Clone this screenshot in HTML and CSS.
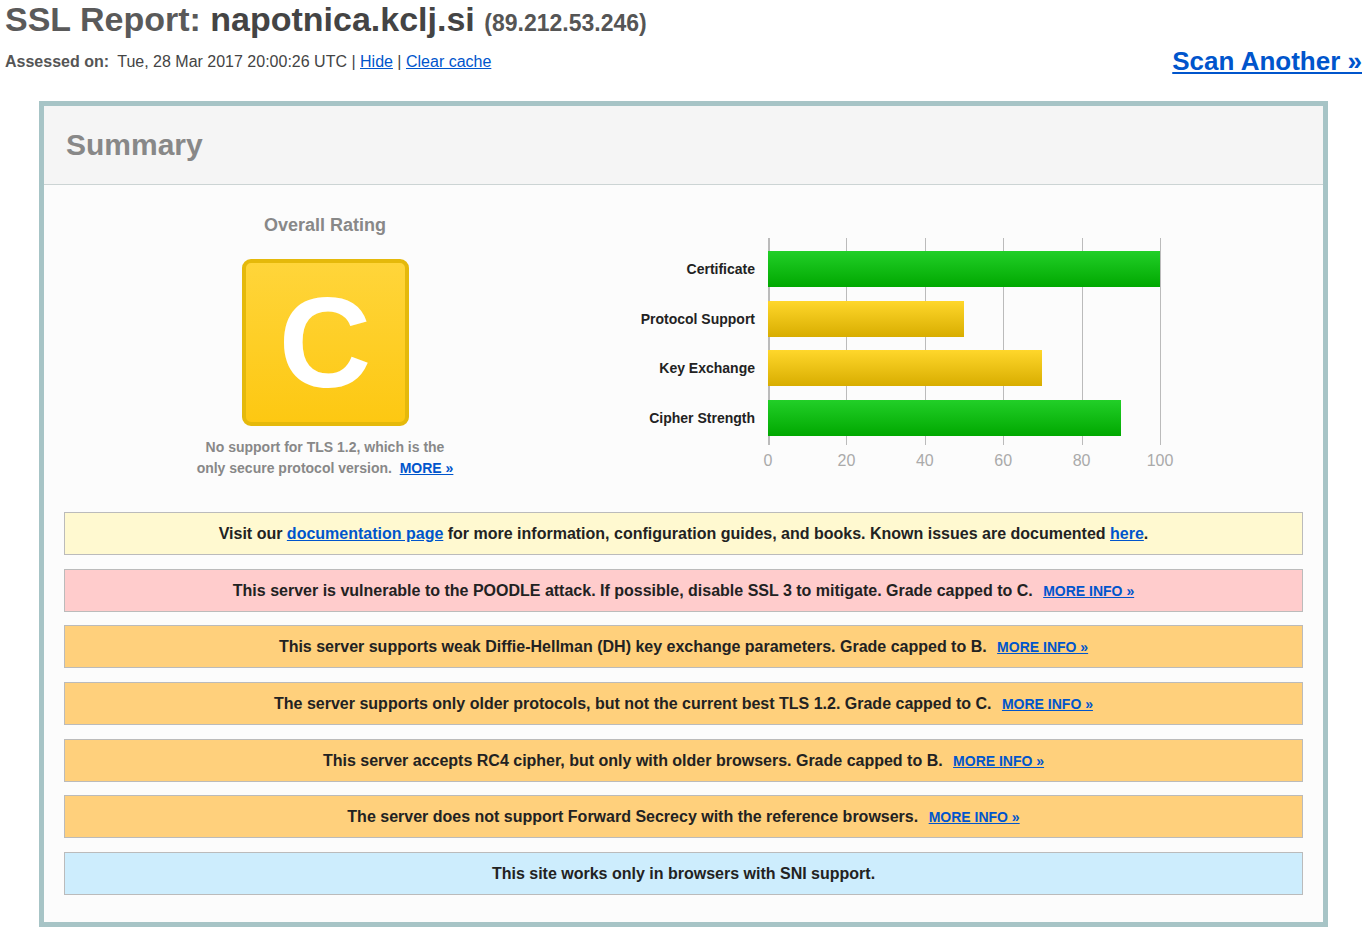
FILE: index.html
```html
<!DOCTYPE html>
<html lang="en">
<head>
  <meta charset="UTF-8" />
  <title>SSL Server Test: napotnica.kclj.si</title>
  <link rel="stylesheet" href="styles.css">
</head>
<body>
  <div class="page">
    <div class="top">
      <div>
        <h1>SSL Report: <b>napotnica.kclj.si</b> <span class="ip">(89.212.53.246)</span></h1>
        <div class="assessed">
          <span class="lbl">Assessed on:</span> Tue, 28 Mar 2017 20:00:26 UTC | <a href="#">Hide</a> | <a href="#">Clear cache</a>
        </div>
      </div>
      <a class="scan" href="#">Scan Another &raquo;</a>
    </div>

    <div class="report">
      <div class="report-head">Summary</div>
      <div class="report-body">
        <div class="overview">
          <div class="rating">
            <div class="rating-title">Overall Rating</div>
            <div class="grade">C</div>
            <div class="rating-note">
              No support for TLS 1.2, which is the<br>
              only secure protocol version. &nbsp;<a href="#">MORE &raquo;</a>
            </div>
          </div>

          <div class="chart">
            <div class="labels">
              <div>Certificate</div>
              <div>Protocol Support</div>
              <div>Key Exchange</div>
              <div>Cipher Strength</div>
            </div>
            <div class="plot-wrap">
              <div class="plot">
                <span class="gl" style="left:0%"></span>
                <span class="gl" style="left:20%"></span>
                <span class="gl" style="left:40%"></span>
                <span class="gl" style="left:60%"></span>
                <span class="gl" style="left:80%"></span>
                <span class="gl" style="left:100%"></span>
                <div class="bar green" style="width:100%"></div>
                <div class="bar yellow" style="width:50%"></div>
                <div class="bar yellow" style="width:70%"></div>
                <div class="bar green" style="width:90%"></div>
              </div>
              <div class="ticks">
                <span style="left:0%">0</span>
                <span style="left:20%">20</span>
                <span style="left:40%">40</span>
                <span style="left:60%">60</span>
                <span style="left:80%">80</span>
                <span style="left:100%">100</span>
              </div>
            </div>
          </div>
        </div>

        <div class="notices">
          <div class="notice info">Visit our <a href="#">documentation page</a> for more information, configuration guides, and books. Known issues are documented <a href="#">here</a>.</div>
          <div class="notice error">This server is vulnerable to the POODLE attack. If possible, disable SSL 3 to mitigate. Grade capped to C. <a class="more" href="#">MORE INFO &raquo;</a></div>
          <div class="notice warn">This server supports weak Diffie-Hellman (DH) key exchange parameters. Grade capped to B. <a class="more" href="#">MORE INFO &raquo;</a></div>
          <div class="notice warn">The server supports only older protocols, but not the current best TLS 1.2. Grade capped to C. <a class="more" href="#">MORE INFO &raquo;</a></div>
          <div class="notice warn">This server accepts RC4 cipher, but only with older browsers. Grade capped to B. <a class="more" href="#">MORE INFO &raquo;</a></div>
          <div class="notice warn">The server does not support Forward Secrecy with the reference browsers. <a class="more" href="#">MORE INFO &raquo;</a></div>
          <div class="notice note">This site works only in browsers with SNI support.</div>
        </div>
      </div>
    </div>
  </div>
</body>
</html>
```

FILE: styles.css
```css
body {
  margin: 0;
  font-family: "Liberation Sans", Arial, sans-serif;
  color: #222;
  background: #fff;
}
a {
  color: #0055cc;
}
.page {
  padding: 0 8px 0 5px;
}
.top {
  display: flex;
  justify-content: space-between;
  align-items: flex-end;
}
h1 {
  margin: 0;
  font-size: 34px;
  line-height: 38px;
  color: #5a5a5a;
}
h1 b {
  color: #444;
}
h1 .ip {
  font-size: 23px;
  color: #555;
}
.assessed {
  margin-top: 6px;
  font-size: 16px;
  line-height: 28px;
  color: #444;
}
.assessed .lbl {
  font-weight: bold;
  color: #555;
  margin-right: 4px;
}
.scan {
  font-size: 26px;
  font-weight: bold;
  line-height: 30px;
  margin-bottom: 0;
}
.report {
  width: 1279px;
  margin: 25px auto 0;
  border: 5px solid #a7c4c6;
  background: #fcfcfc;
}
.report-head {
  height: 78px;
  line-height: 78px;
  padding-left: 22px;
  background: #f5f5f5;
  border-bottom: 1px solid #ccd4d4;
  font-size: 30px;
  font-weight: bold;
  color: #888;
}
.report-body {
  padding: 0 20px 13px;
}
.overview {
  display: flex;
  height: 327px;
}
.rating {
  width: 522px;
  padding-top: 28px;
  text-align: center;
}
.rating-title {
  font-size: 18px;
  font-weight: bold;
  line-height: 24px;
  color: #888;
}
.grade {
  width: 159px;
  height: 159px;
  margin: 22px auto 0;
  border: 4px solid #e5b90b;
  border-radius: 9px;
  background: linear-gradient(#ffd53a, #fdc812);
  color: #fff;
  font-size: 128px;
  font-weight: bold;
  line-height: 159px;
}
.rating-note {
  margin-top: 11px;
  font-size: 14px;
  font-weight: bold;
  line-height: 21px;
  color: #888;
}
.rating-note a {
  color: #0055cc;
}
.chart {
  display: flex;
  margin-top: 53px;
}
.labels {
  width: 169px;
  padding-top: 13px;
  text-align: right;
  font-size: 14px;
  font-weight: bold;
}
.labels div {
  height: 36px;
  line-height: 36px;
  margin-bottom: 13.5px;
}
.plot-wrap {
  margin-left: 13px;
  width: 392px;
}
.plot {
  position: relative;
  padding: 13px 0 9px;
}
.gl {
  position: absolute;
  top: 0;
  bottom: 0;
  width: 1px;
  background: #bbb;
}
.gl:first-child {
  width: 2px;
}
.bar {
  position: relative;
  height: 36px;
  margin-bottom: 13.5px;
}
.bar:last-child {
  margin-bottom: 0;
}
.green {
  background: linear-gradient(#22cf28, #00a800);
}
.yellow {
  background: linear-gradient(#ffd72b, #d8ad00);
}
.ticks {
  position: relative;
  height: 30px;
  font-size: 16px;
  color: #aaa;
}
.ticks span {
  position: absolute;
  top: 7px;
  transform: translateX(-50%);
}
.notice {
  margin-bottom: 13.67px;
  padding: 11px 10px;
  border: 1px solid #bbb;
  font-size: 16px;
  font-weight: bold;
  line-height: 19px;
  text-align: center;
  color: #222;
}
.notice .more {
  margin-left: 6px;
  font-size: 14px;
  line-height: 14px;
}
.info {
  background: #fff9d0;
}
.error {
  background: #ffcccc;
}
.warn {
  background: #ffd07c;
}
.note {
  background: #cdedfd;
}
```
